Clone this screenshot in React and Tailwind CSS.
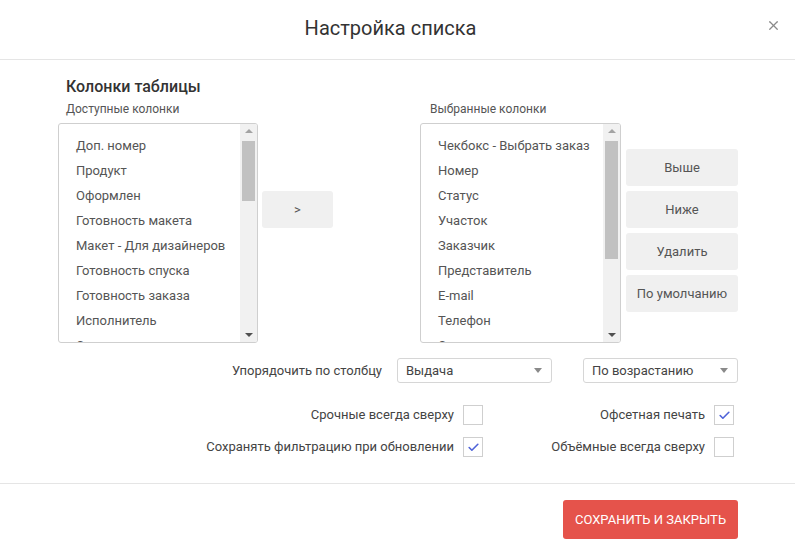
import { Check, X } from 'lucide-react'

const available = [
  'Доп. номер',
  'Продукт',
  'Оформлен',
  'Готовность макета',
  'Макет - Для дизайнеров',
  'Готовность спуска',
  'Готовность заказа',
  'Исполнитель',
  'Сумма',
]

const selected = [
  'Чекбокс - Выбрать заказ',
  'Номер',
  'Статус',
  'Участок',
  'Заказчик',
  'Представитель',
  'E-mail',
  'Телефон',
  'Сумма',
]

function ListBox({ items, thumbTop, thumbHeight }) {
  return (
    <div className="relative h-[220px] w-[201px] overflow-hidden rounded-[3px] border border-[#cfcfcf] bg-white">
      <ul className="pt-[9px] pl-[17px] pr-[20px]">
        {items.map((it) => (
          <li key={it} className="h-[25px] whitespace-nowrap text-[13px] leading-[25px] text-[#555]">
            {it}
          </li>
        ))}
      </ul>
      <div className="absolute top-0 right-0 bottom-0 flex w-[17px] flex-col items-center bg-[#f1f1f1]">
        <div className="mt-[5px] h-0 w-0 border-x-[4px] border-b-[4px] border-x-transparent border-b-[#a3a3a3]" />
        <div className="absolute left-[2px] w-[13px] bg-[#c1c1c1]" style={{ top: thumbTop, height: thumbHeight }} />
        <div className="absolute bottom-[5px] h-0 w-0 border-x-[4px] border-t-[4px] border-x-transparent border-t-[#505050]" />
      </div>
    </div>
  )
}

function GrayButton({ children, className = '' }) {
  return (
    <button className={`h-[37px] rounded-[3px] bg-[#f0f0f0] text-[13px] text-[#555] ${className}`}>{children}</button>
  )
}

function Select({ value }) {
  return (
    <div className="flex h-[25px] w-[155px] items-center justify-between rounded-[3px] border border-[#d6d6d6] bg-white pl-[8px] pr-[9px] text-[13px] text-[#444]">
      <span>{value}</span>
      <span className="h-0 w-0 border-x-[4px] border-t-[5px] border-x-transparent border-t-[#8a8a8a]" />
    </div>
  )
}

function Box({ checked }) {
  return (
    <span className="flex h-[20px] w-[20px] items-center justify-center border border-[#cfcfcf] bg-white">
      {checked && <Check size={13} strokeWidth={3} className="text-[#4f63d8]" />}
    </span>
  )
}

export default function App() {
  return (
    <div className="flex h-[551px] w-[795px] flex-col bg-white font-['Roboto',sans-serif] text-[#444]">
      <header className="relative flex h-[60px] items-center justify-center border-b border-[#e5e5e5] pb-[3px] pr-[14px]">
        <h2 className="text-[20px] font-normal text-[#333]">Настройка списка</h2>
        <X size={15} strokeWidth={2} className="absolute right-[14px] top-[18px] text-[#8a8a8a]" />
      </header>

      <main className="flex-1 pl-[58px] pr-[57px] pt-[17px]">
        <h3 className="pl-[8px] text-[16px] font-medium leading-[20px] text-[#333]">Колонки таблицы</h3>
        <div className="flex pt-[5px] text-[12px] leading-[14px] text-[#555]">
          <span className="w-[364px] pl-[8px]">Доступные колонки</span>
          <span className="pl-[8px]">Выбранные колонки</span>
        </div>

        <div className="mt-[7px] flex">
          <ListBox items={available} thumbTop={17} thumbHeight={60} />
          <div className="pl-[4px] pt-[68px]">
            <GrayButton className="w-[71px]">&gt;</GrayButton>
          </div>
          <div className="ml-[87px]">
            <ListBox items={selected} thumbTop={17} thumbHeight={118} />
          </div>
          <div className="flex flex-col gap-[5px] pl-[5px] pt-[26px]">
            <GrayButton className="w-[112px]">Выше</GrayButton>
            <GrayButton className="w-[112px]">Ниже</GrayButton>
            <GrayButton className="w-[112px]">Удалить</GrayButton>
            <GrayButton className="w-[112px]">По умолчанию</GrayButton>
          </div>
        </div>

        <div className="mt-[15px] flex items-center justify-end text-[13px] text-[#444]">
          <span className="mr-[15px]">Упорядочить по столбцу</span>
          <Select value="Выдача" />
          <div className="ml-[31px]">
            <Select value="По возрастанию" />
          </div>
        </div>

        <div className="mt-[22px] grid grid-cols-[1fr_auto] gap-y-[12px] pr-[4px] text-[13px] text-[#444]">
          <div className="flex items-center justify-end gap-[9px]">
            <span>Срочные всегда сверху</span>
            <Box />
          </div>
          <div className="flex w-[251px] items-center justify-end gap-[9px]">
            <span>Офсетная печать</span>
            <Box checked />
          </div>
          <div className="flex items-center justify-end gap-[9px]">
            <span>Сохранять фильтрацию при обновлении</span>
            <Box checked />
          </div>
          <div className="flex items-center justify-end gap-[9px]">
            <span>Объёмные всегда сверху</span>
            <Box />
          </div>
        </div>
      </main>

      <footer className="flex h-[68px] items-start justify-end border-t border-[#e5e5e5] pr-[57px] pt-[16px]">
        <button className="h-[39px] w-[175px] rounded-[3px] bg-[#e5534b] text-[13px] uppercase text-white">
          Сохранить и закрыть
        </button>
      </footer>
    </div>
  )
}
